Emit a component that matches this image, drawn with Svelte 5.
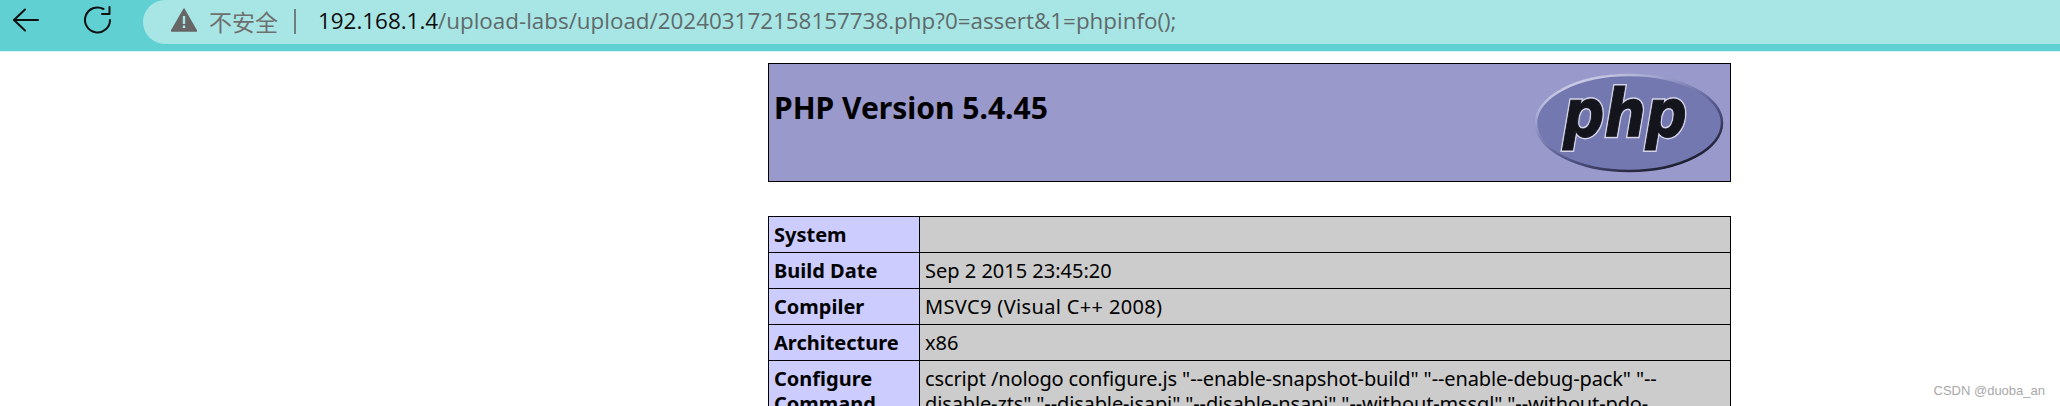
<script>
  const rows = [
    { k: 'System', v: '' },
    { k: 'Build Date', v: 'Sep 2 2015 23:45:20' },
    { k: 'Compiler', v: 'MSVC9 (Visual C++ 2008)', wide: true },
    { k: 'Architecture', v: 'x86' }
  ];
</script>

<div class="shot">
  <header class="chrome">
    <button class="nav back" aria-label="Back">
      <svg width="28" height="24" viewBox="0 0 28 24" fill="none" stroke="#111" stroke-width="2" stroke-linecap="round" stroke-linejoin="round">
        <path d="M2 12 H26" /><path d="M13 1.500 L2 12 L13 22.500" />
      </svg>
    </button>
    <button class="nav reload" aria-label="Reload">
      <svg width="28" height="28" viewBox="0 0 28 28" fill="none" stroke="#111" stroke-width="2" stroke-linecap="round" stroke-linejoin="round">
        <path d="M26 14 A12.500 12.500 0 1 1 19.500 3" /><path d="M18 8 H25.500 V1" />
      </svg>
    </button>
    <div class="omnibox">
      <svg class="warn" width="26" height="24" viewBox="0 0 26 24">
        <path d="M13 1 L25.500 23 H0.500 Z" fill="#666" stroke="#666" stroke-width="1.500" stroke-linejoin="round" />
        <rect x="11.800" y="8" width="2.400" height="8" fill="#a8e6e5" /><rect x="11.800" y="17.500" width="2.400" height="2.500" fill="#a8e6e5" />
      </svg>
      <span class="insecure">不安全</span>
      <span class="sep"></span>
      <span class="url"><span class="host">192.168.1.4</span>/upload-labs/upload/202403172158157738.php?0=assert&amp;1=phpinfo();</span>
    </div>
  </header>

  <main class="page">
    <div class="banner">
      <h1>PHP Version 5.4.45</h1>
      <svg class="logo" width="190" height="100" viewBox="0 0 190 100">
        <defs>
          <linearGradient id="rim" x1="0.100" y1="0" x2="0.800" y2="1">
            <stop offset="0" stop-color="#e4e4f2" />
            <stop offset="0.300" stop-color="#9a9ecb" />
            <stop offset="0.600" stop-color="#55598e" />
            <stop offset="1" stop-color="#14141f" />
          </linearGradient>
        </defs>
        <ellipse cx="95" cy="50" rx="94" ry="49" fill="#7478b0" />
        <ellipse cx="95" cy="50" rx="93" ry="48" fill="none" stroke="url(#rim)" stroke-width="2.500" />
        <text x="91" y="63" text-anchor="middle" class="logotext outline" textLength="124" lengthAdjust="spacingAndGlyphs">php</text>
        <text x="91" y="63" text-anchor="middle" class="logotext" textLength="124" lengthAdjust="spacingAndGlyphs">php</text>
      </svg>
    </div>

    <table>
      <tbody>
        {#each rows as r}
          <tr><th>{r.k}</th><td class:wide={r.wide}>{r.v}</td></tr>
        {/each}
        <tr>
          <th>Configure Command</th>
          <td class="cmd">cscript /nologo configure.js "--enable-snapshot-build" "--enable-debug-pack" "--<br />disable-zts" "--disable-isapi" "--disable-nsapi" "--without-mssql" "--without-pdo-</td>
        </tr>
      </tbody>
    </table>
  </main>

  <div class="mark">CSDN @duoba_an</div>
</div>

<style>
  :global(body) { margin: 0; background: #fff; }
  .shot { position: relative; width: 2060px; height: 406px; overflow: hidden; font-family: "Noto Sans", "Open Sans", sans-serif; }
  .chrome { display: flex; height: 51px; background: #60d0d3; border-bottom: 1px solid #dff5f5; align-items: flex-start; }
  .nav { border: 0; background: none; padding: 0; display: flex; }
  .back { margin: 8px 0 0 12px; }
  .reload { margin: 6px 0 0 44px; }
  .omnibox { margin-left: 31px; flex: 1; height: 44px; background: #a8e6e5; border-radius: 26px 0 0 26px; display: flex; align-items: center; }
  .warn { margin-left: 28px; margin-bottom: 4px; }
  .insecure { margin-left: 12px; font: 23px "Noto Sans CJK SC", sans-serif; color: #6f6f6f; margin-bottom: 2px; }
  .sep { width: 2px; height: 25px; background: #6f7f80; margin: 0 22px 2px 16px; }
  .url { font-family: "Open Sans", sans-serif; font-size: 22.400px; color: #5f6a6b; white-space: nowrap; margin-bottom: 3px; }
  .host { color: #0c0c0c; }
  .page { width: 963px; margin: 11px 0 0 768px; color: #000; }
  .banner { box-sizing: border-box; height: 119px; border: 1px solid #000; background: #9999cc; display: flex; justify-content: space-between; align-items: flex-start; }
  h1 { margin: 24px 0 0 5px; font-size: 30px; line-height: 40px; font-weight: 700; }
  .logo { margin: 9px 6px 0 0; }
  .logotext { font: italic 700 66px "DejaVu Sans", sans-serif; fill: #14141c; stroke: #14141c; stroke-width: 1px; }
  .outline { stroke: #d4d4e8; stroke-width: 4px; fill: #d4d4e8; }
  table { border-collapse: collapse; width: 963px; margin-top: 34px; table-layout: fixed; font-size: 20px; line-height: 25px; }
  th, td { border: 1px solid #000; padding: 5px; text-align: left; vertical-align: baseline; height: 25px; }
  th { width: 140px; background: #ccccff; font-weight: 700; }
  td { background: #cccccc; white-space: nowrap; overflow: hidden; }
  .wide { letter-spacing: 0.350px; }
  .cmd { letter-spacing: -0.130px; }
  .mark { position: absolute; right: 15px; bottom: 8px; font: 13px "Liberation Sans", sans-serif; color: #a8a8a8; }
</style>
